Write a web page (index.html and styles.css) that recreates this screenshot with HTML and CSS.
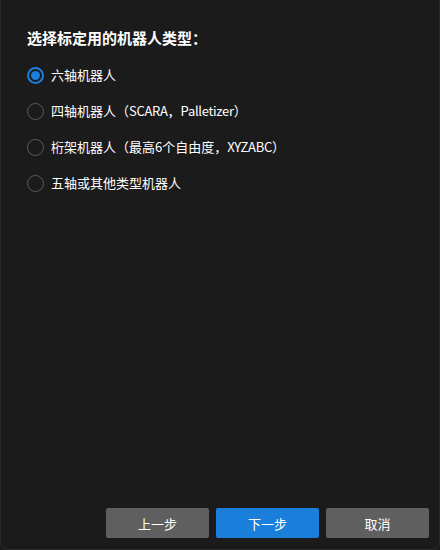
FILE: index.html
```html
<!DOCTYPE html>
<html lang="zh">
<head>
<meta charset="utf-8">
<link rel="stylesheet" href="styles.css">
</head>
<body>
<div class="window">
  <div class="content">
    <h1 class="title">选择标定用的机器人类型：</h1>
    <ul class="options">
      <li class="option"><span class="radio checked"></span><span class="label">六轴机器人</span></li>
      <li class="option"><span class="radio"></span><span class="label">四轴机器人（<span class="latin">SCARA</span>，<span class="latin">Palletizer</span>）</span></li>
      <li class="option"><span class="radio"></span><span class="label">桁架机器人（最高6个自由度，<span class="latin">XYZABC</span>）</span></li>
      <li class="option"><span class="radio"></span><span class="label">五轴或其他类型机器人</span></li>
    </ul>
  </div>
  <div class="footer">
    <button class="btn">上一步</button>
    <button class="btn primary">下一步</button>
    <button class="btn">取消</button>
  </div>
</div>
</body>
</html>
```
FILE: styles.css
```css
html, body {
  margin: 0;
  padding: 0;
  background: #1b1b1b;
}
body {
  width: 440px;
  height: 550px;
  font-family: "Noto Sans CJK SC", "Noto Sans", sans-serif;
  color: #ffffff;
}
.window {
  box-sizing: border-box;
  width: 440px;
  height: 550px;
  display: flex;
  flex-direction: column;
  justify-content: space-between;
  border-radius: 0 0 8px 8px;
  border-right: 1px solid #2a2a2a;
  border-bottom: 1px solid #2a2a2a;
  border-left: 1px solid #2a2a2a;
}
.content {
  padding: 27px 0 0 26px;
}
.title {
  margin: 0;
  font-size: 15px;
  font-weight: 700;
  line-height: 22px;
}
.options {
  list-style: none;
  margin: 15px 0 0 0;
  padding: 0;
  display: flex;
  flex-direction: column;
  gap: 14px;
}
.option {
  display: flex;
  align-items: center;
  height: 22px;
  font-size: 13px;
}
.radio {
  box-sizing: border-box;
  width: 17px;
  height: 17px;
  border-radius: 50%;
  border: 1.5px solid #5c5c5c;
  margin-right: 7px;
  display: flex;
  align-items: center;
  justify-content: center;
}
.radio.checked {
  border: 2px solid #1a7fda;
}
.radio.checked::after {
  content: "";
  width: 9px;
  height: 9px;
  border-radius: 50%;
  background: #1a7fda;
}
.label {
  line-height: 22px;
}
.latin {
  letter-spacing: -0.3px;
}
.footer {
  display: flex;
  justify-content: flex-end;
  gap: 7px;
  padding: 0 10px 11px 0;
}
.btn {
  width: 103px;
  height: 30px;
  border: none;
  border-radius: 2px;
  background: #5f5f5f;
  color: #ffffff;
  font-family: "Noto Sans CJK SC", "Noto Sans", sans-serif;
  font-size: 13px;
  padding: 0;
}
.btn.primary {
  background: #1a7fda;
}
```
